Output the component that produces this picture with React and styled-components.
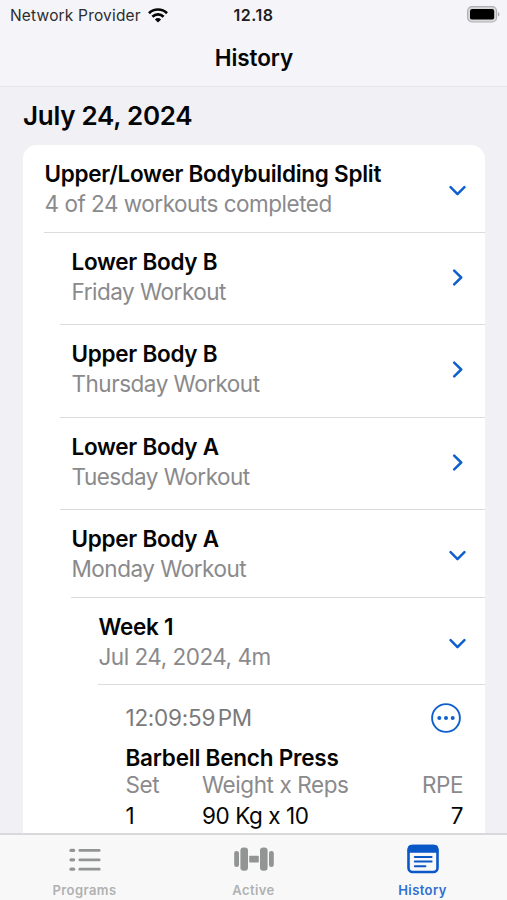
import React, { useState } from 'react';
import styled, { createGlobalStyle } from 'styled-components';

const GlobalStyle = createGlobalStyle`
  * {
    box-sizing: border-box;
  }
  body {
    margin: 0;
    background: #f0f0f5;
    font-family: Inter, 'Liberation Sans', sans-serif;
    color: #050505;
  }
`

const Screen = styled.div`
  display: flex;
  flex-direction: column;
  height: 900px;
  overflow: hidden;
`

const Header = styled.header`
  flex: none;
  height: 87px;
  background: #f4f4f9;
  border-bottom: 1px solid #e4e4e9;
`

const StatusBar = styled.div`
  display: grid;
  grid-template-columns: minmax(0, 1fr) auto minmax(0, 1fr);
  align-items: center;
  height: 29px;
  padding: 0 7px;
`

const Carrier = styled.div`
  display: flex;
  align-items: center;
  gap: 7px;
  padding: 1px 0 0 3px;
  font-size: 15.5px;
  letter-spacing: 0.18px;
  color: #2c2c2e;
  white-space: nowrap;
`

const Clock = styled.div`
  padding-top: 1px;
  font-size: 16px;
  font-weight: 600;
  letter-spacing: 0.5px;
  color: #1c1c1e;
`

const BatteryIcon = styled.svg`
  justify-self: end;
`

const Title = styled.h1`
  margin: 0;
  padding: 14px 0 0 1px;
  font-size: 22.5px;
  line-height: 30px;
  font-weight: 600;
  letter-spacing: -0.1px;
  text-align: center;
`

const Content = styled.main`
  flex: 1;
  min-height: 0;
  overflow: hidden;
  padding: 0 22px 0 23px;
`

const DateTitle = styled.h2`
  margin: 0;
  height: 58px;
  padding-top: 12px;
  font-size: 26px;
  line-height: 34px;
  font-weight: 600;
  letter-spacing: -0.27px;
`

const Card = styled.section`
  min-height: 720px;
  background: #fff;
  border-radius: 14px 14px 0 0;
`

const Row = styled.div`
  display: flex;
  justify-content: space-between;
  height: ${p => p.$height}px;
  margin-left: ${p => p.$line}px;
  padding: 14px 19.5px 0 ${p => p.$indent - p.$line}px;
  border-bottom: 1px solid #dcdcde;
  cursor: pointer;
`

const RowTitle = styled.div`
  font-size: 22.5px;
  line-height: 30px;
  font-weight: 600;
  letter-spacing: -0.27px;
  white-space: nowrap;
`

const RowText = styled.div`
  font-size: 22.5px;
  line-height: 30px;
  letter-spacing: -0.49px;
  color: #8a8a8c;
  white-space: nowrap;
`

const Chevron = styled.svg`
  flex: none;
  margin-top: ${p => (p.$open ? 23 : 22)}px;
  transform: rotate(${p => (p.$open ? 90 : 0)}deg);
`

const Session = styled.div`
  padding: 14px 22px 0 102.5px;
`

const SessionHead = styled.div`
  display: flex;
  justify-content: space-between;
  align-items: center;
  height: 37px;
  padding-right: 2px;
`

const Time = styled.span`
  font-size: 22.5px;
  letter-spacing: -0.25px;
  word-spacing: -3.5px;
  color: #7a7a7c;
`

const Exercise = styled.div`
  margin-top: 7px;
  font-size: 22.5px;
  line-height: 30px;
  font-weight: 600;
  letter-spacing: -0.22px;
`

const Sets = styled.div`
  display: grid;
  grid-template-columns: 76.5px 1fr auto;
  margin-top: -3px;
  font-size: 22.5px;
  line-height: 30.5px;
  letter-spacing: -0.42px;
`

const SetHead = styled.span`
  color: #8a8a8c;
`

const SetValue = styled.span`
  text-align: ${p => (p.$right ? 'right' : 'left')};
`

const TabBar = styled.nav`
  flex: none;
  display: grid;
  grid-template-columns: repeat(3, 1fr);
  height: 67px;
  border-top: 2px solid #d9d9dc;
  background: #f8f8f9;
`

const Tab = styled.button`
  display: flex;
  flex-direction: column;
  align-items: center;
  padding: 6px 0 0;
  border: 0;
  background: none;
  font-family: inherit;
  font-size: 13px;
  line-height: 16px;
  font-weight: 600;
  letter-spacing: 0.4px;
  color: ${p => (p.$active ? '#2f6fd0' : '#b0b1b1')};
`

const TabIcon = styled.svg`
  margin-bottom: 5px;
  color: ${p => (p.$active ? '#0a57c8' : '#929594')};
`

const rows = [
  { id: 'program', title: 'Upper/Lower Bodybuilding Split', text: '4 of 24 workouts completed', height: 88, line: 21, indent: 21.5, open: true },
  { id: 'lowerB', title: 'Lower Body B', text: 'Friday Workout', height: 92, line: 37, indent: 48.5 },
  { id: 'upperB', title: 'Upper Body B', text: 'Thursday Workout', height: 92.5, line: 37, indent: 48.5 },
  { id: 'lowerA', title: 'Lower Body A', text: 'Tuesday Workout', height: 92, line: 37, indent: 48.5 },
  { id: 'upperA', title: 'Upper Body A', text: 'Monday Workout', height: 88, line: 48, indent: 48.5, open: true },
  { id: 'week', title: 'Week 1', text: 'Jul 24, 2024, 4m', height: 87.5, line: 75, indent: 75.5, open: true },
]

const Wifi = () => (
  <svg width="20" height="15" viewBox="0 0 20 15" fill="none" stroke="#050505" strokeWidth="2.7">
    <path d="M1 5.2a12.8 12.8 0 0 1 18 0" />
    <path d="M4.4 8.7a8 8 0 0 1 11.2 0" />
    <path d="M10 14.6L6.9 11.4a4.5 4.5 0 0 1 6.2 0z" fill="#050505" stroke="none" />
  </svg>
)

const Battery = () => (
  <BatteryIcon width="33" height="17" viewBox="0 0 33 17">
    <rect x="0.6" y="0.6" width="29" height="15.4" rx="4.5" fill="#d9d9dc" stroke="#b0b0b4" strokeWidth="1.2" />
    <rect x="3" y="3" width="24.2" height="10.6" rx="2.2" fill="#000" />
    <path d="M31 6v4.6a2.5 2.5 0 0 0 0-4.6z" fill="#acacb0" />
  </BatteryIcon>
)

const More = () => (
  <svg width="30" height="30" viewBox="0 0 30 30" fill="#0f5fcd">
    <circle cx="15" cy="15" r="13.9" fill="none" stroke="#0f5fcd" strokeWidth="1.9" />
    <circle cx="8.3" cy="15" r="2" />
    <circle cx="15" cy="15" r="2" />
    <circle cx="21.7" cy="15" r="2" />
  </svg>
)

const ProgramsIcon = ({ active }) => (
  <TabIcon $active={active} width="34" height="36" viewBox="0 0 34 36" fill="currentColor">
    {[8, 17.4, 26.8].map(y => (
      <g key={y}>
        <rect x="1.4" y={y - 0.2} width="5.8" height="3.2" rx="1.6" />
        <rect x="10.5" y={y} width="22" height="2.8" rx="1.2" />
      </g>
    ))}
  </TabIcon>
)

const ActiveIcon = ({ active }) => (
  <TabIcon $active={active} width="40" height="36" viewBox="0 0 40 36" fill="currentColor">
    <rect x="0.2" y="10" width="4.8" height="16" rx="2.2" />
    <rect x="6.4" y="6.4" width="7.6" height="23.4" rx="3.2" />
    <rect x="15.2" y="14.8" width="9.6" height="6.8" rx="0.8" />
    <rect x="26" y="6.4" width="7.6" height="23.4" rx="3.2" />
    <rect x="35" y="10" width="4.8" height="16" rx="2.2" />
  </TabIcon>
)

const HistoryIcon = ({ active }) => (
  <TabIcon $active={active} width="32" height="36" viewBox="0 0 32 36">
    <rect x="1.5" y="5" width="29" height="26" rx="4" fill="none" stroke="currentColor" strokeWidth="2.6" />
    <path d="M0.8 11.8V7.7a4 4 0 0 1 4-4h22.4a4 4 0 0 1 4 4V11.8z" fill="currentColor" />
    <path d="M7.8 16h16.8M7.8 20.5h16.8M7.8 25.2h10.6" stroke="currentColor" strokeWidth="2" strokeLinecap="round" />
  </TabIcon>
)

const tabs = [
  { name: 'Programs', Icon: ProgramsIcon },
  { name: 'Active', Icon: ActiveIcon },
  { name: 'History', Icon: HistoryIcon },
]

export default function App() {
  const [tab, setTab] = useState('History');

  return (
    <>
      <GlobalStyle />
      <Screen>
        <Header>
          <StatusBar>
            <Carrier>Network Provider <Wifi /></Carrier>
            <Clock>12.18</Clock>
            <Battery />
          </StatusBar>
          <Title>History</Title>
        </Header>
        <Content>
          <DateTitle>July 24, 2024</DateTitle>
          <Card>
            {rows.map(row => (
              <Row key={row.id} $height={row.height} $line={row.line} $indent={row.indent}>
                <div>
                  <RowTitle>{row.title}</RowTitle>
                  <RowText>{row.text}</RowText>
                </div>
                <Chevron $open={row.open} width="17" height="17" viewBox="0 0 17 17" fill="none" stroke="#0f5fcd" strokeWidth="2.5" strokeLinecap="round" strokeLinejoin="round">
                  <path d="M5.2 1.6l7 6.9-7 6.9" />
                </Chevron>
              </Row>
            ))}
            <Session>
              <SessionHead>
                <Time>12:09:59 PM</Time>
                <More />
              </SessionHead>
              <Exercise>Barbell Bench Press</Exercise>
              <Sets>
                <SetHead>Set</SetHead>
                <SetHead>Weight x Reps</SetHead>
                <SetHead>RPE</SetHead>
                <SetValue>1</SetValue>
                <SetValue>90 Kg x 10</SetValue>
                <SetValue $right>7</SetValue>
              </Sets>
            </Session>
          </Card>
        </Content>
        <TabBar>
          {tabs.map(({ name, Icon }) => (
            <Tab key={name} $active={tab === name} onClick={() => setTab(name)}>
              <Icon active={tab === name} />
              {name}
            </Tab>
          ))}
        </TabBar>
      </Screen>
    </>
  );
}
